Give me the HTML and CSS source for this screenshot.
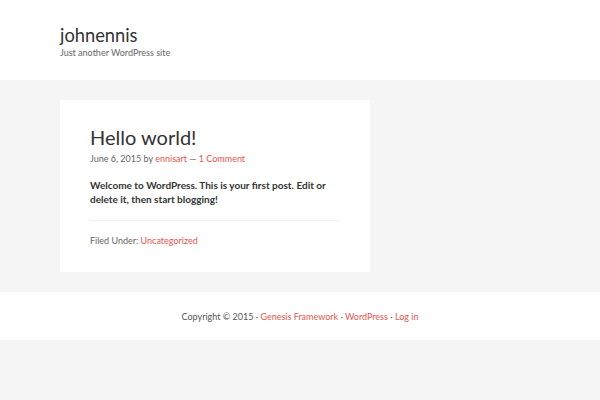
FILE: index.html
```html
<!DOCTYPE html>
<html>
<head>
<meta charset="utf-8">
<link rel="stylesheet" href="styles.css">
</head>
<body>
<header class="site-header">
  <div class="wrap">
    <div class="site-title">johnennis</div>
    <div class="site-description">Just another WordPress site</div>
  </div>
</header>
<div class="site-inner">
  <article class="entry">
    <h1 class="entry-title">Hello world!</h1>
    <p class="entry-meta">June 6, 2015 by <a href="#">ennisart</a> <span class="dash">—</span> <a href="#">1 Comment</a></p>
    <div class="entry-content">
      <p>Welcome to WordPress. This is your first post. Edit or delete it, then start blogging!</p>
    </div>
    <footer class="entry-footer">
      <p class="entry-meta">Filed Under: <a href="#">Uncategorized</a></p>
    </footer>
  </article>
</div>
<footer class="site-footer">
  <p>Copyright © 2015 · <a href="#">Genesis Framework</a> · <a href="#">WordPress</a> · <a href="#">Log in</a></p>
</footer>
</body>
</html>
```
FILE: styles.css
```css
html, body {
  margin: 0;
  padding: 0;
}
body {
  background: #f5f5f5;
  font-family: Lato, "Open Sans", sans-serif;
  color: #333;
}
a {
  color: #e5554e;
  text-decoration: none;
}
.site-header {
  background: #fff;
  height: 80px;
  box-sizing: border-box;
  padding: 23px 60px 0;
}
.site-title {
  font-size: 18.3px;
  line-height: 24px;
  color: #333;
}
.site-description {
  font-size: 9px;
  line-height: 12px;
  color: #666;
}
.site-inner {
  padding: 20px 60px 20px;
}
.entry {
  background: #fff;
  width: 310px;
  box-sizing: border-box;
  padding: 23px 30px 25px;
}
.entry-title {
  margin: 0;
  font-size: 20px;
  font-weight: normal;
  line-height: 28px;
  color: #333;
}
.entry-meta {
  margin: 0;
  font-size: 9px;
  line-height: 12px;
  color: #666;
}
.entry-title + .entry-meta {
  margin-top: 2px;
}
.entry-content p {
  margin: 13px 0 0;
  font-size: 10px;
  line-height: 14px;
  font-weight: 700;
  color: #333;
}
.entry-footer {
  margin-top: 14px;
  border-top: 1px solid #f0f0f0;
  padding-top: 14px;
}
.site-footer {
  background: #fff;
  height: 48px;
  display: flex;
  align-items: center;
  justify-content: center;
}
.site-footer p {
  margin: 0;
  font-size: 9px;
  color: #555;
}
```
